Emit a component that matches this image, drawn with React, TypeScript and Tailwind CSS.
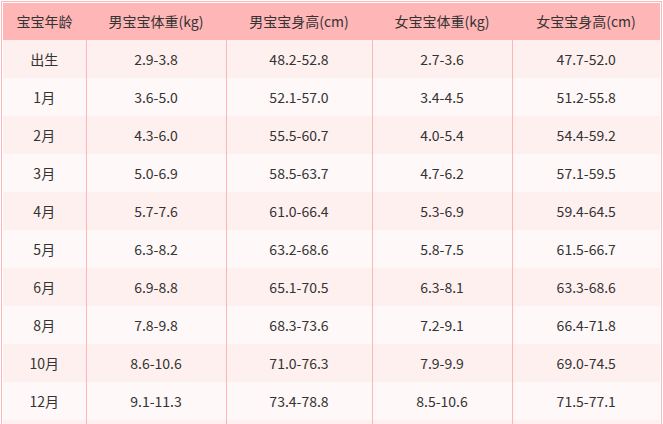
const headers = ['宝宝年龄', '男宝宝体重(kg)', '男宝宝身高(cm)', '女宝宝体重(kg)', '女宝宝身高(cm)'];

const rows: string[][] = [
  ['出生', '2.9-3.8', '48.2-52.8', '2.7-3.6', '47.7-52.0'],
  ['1月', '3.6-5.0', '52.1-57.0', '3.4-4.5', '51.2-55.8'],
  ['2月', '4.3-6.0', '55.5-60.7', '4.0-5.4', '54.4-59.2'],
  ['3月', '5.0-6.9', '58.5-63.7', '4.7-6.2', '57.1-59.5'],
  ['4月', '5.7-7.6', '61.0-66.4', '5.3-6.9', '59.4-64.5'],
  ['5月', '6.3-8.2', '63.2-68.6', '5.8-7.5', '61.5-66.7'],
  ['6月', '6.9-8.8', '65.1-70.5', '6.3-8.1', '63.3-68.6'],
  ['8月', '7.8-9.8', '68.3-73.6', '7.2-9.1', '66.4-71.8'],
  ['10月', '8.6-10.6', '71.0-76.3', '7.9-9.9', '69.0-74.5'],
  ['12月', '9.1-11.3', '73.4-78.8', '8.5-10.6', '71.5-77.1'],
  // next row only peeks in at the bottom edge
  ['', '', '', '', ''],
];

const colWidths = ['w-[83px]', 'w-[140px]', 'w-[146px]', 'w-[140px]', 'w-[148px]'];

export default function App() {
  return (
    <div className="bg-white min-h-screen">
      <div
        className="ml-px mt-px w-[661px] border border-[#ffb6b6] p-px text-[14px] text-[#333]"
        style={{ fontFamily: '"Noto Sans CJK SC", "Noto Sans", sans-serif' }}
      >
        <table className="w-[657px] table-fixed border-collapse">
          <colgroup>
            {colWidths.map((w, i) => (
              <col key={i} className={w} />
            ))}
          </colgroup>
          <thead>
            <tr className="h-[37px] bg-[#ffb6b6]">
              {headers.map((h) => (
                <th key={h} className="p-0 text-center font-normal">
                  {h}
                </th>
              ))}
            </tr>
          </thead>
          <tbody>
            {rows.map((r, i) => (
              <tr key={i} className={i % 2 === 0 ? 'h-[38px] bg-[#fff0f0]' : 'h-[38px] bg-[#fff8f8]'}>
                {r.map((c, j) => (
                  <td
                    key={j}
                    className={j === 0 ? 'p-0 text-center' : 'p-0 text-center border-l border-[#ffb6b6]'}
                  >
                    {c}
                  </td>
                ))}
              </tr>
            ))}
          </tbody>
        </table>
      </div>
    </div>
  );
}
